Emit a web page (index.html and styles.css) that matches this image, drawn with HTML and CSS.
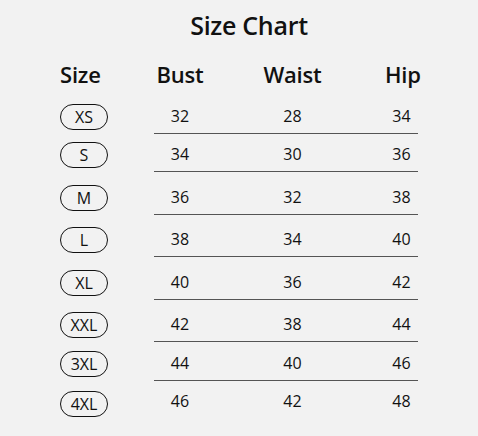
FILE: index.html
```html
<!DOCTYPE html>
<html lang="en">
<head>
<meta charset="utf-8">
<title>Size Chart</title>
<link rel="stylesheet" href="styles.css">
</head>
<body>
<main class="page">
  <h1 class="title">Size Chart</h1>
  <div class="chart">
    <div class="head head-size">Size</div>
    <div class="head">Bust</div>
    <div class="head">Waist</div>
    <div class="head head-hip">Hip</div>

    <div class="size"><span class="pill">XS</span></div>
    <div class="cell">32</div><div class="cell">28</div><div class="cell hip">34</div>

    <div class="size"><span class="pill">S</span></div>
    <div class="cell">34</div><div class="cell">30</div><div class="cell hip">36</div>

    <div class="size"><span class="pill">M</span></div>
    <div class="cell">36</div><div class="cell">32</div><div class="cell hip">38</div>

    <div class="size"><span class="pill">L</span></div>
    <div class="cell">38</div><div class="cell">34</div><div class="cell hip">40</div>

    <div class="size"><span class="pill">XL</span></div>
    <div class="cell">40</div><div class="cell">36</div><div class="cell hip">42</div>

    <div class="size"><span class="pill">XXL</span></div>
    <div class="cell">42</div><div class="cell">38</div><div class="cell hip">44</div>

    <div class="size"><span class="pill">3XL</span></div>
    <div class="cell">44</div><div class="cell">40</div><div class="cell hip">46</div>

    <div class="size last"><span class="pill">4XL</span></div>
    <div class="cell last">46</div><div class="cell last">42</div><div class="cell hip last">48</div>
  </div>
</main>
</body>
</html>
```

FILE: styles.css
```css
html, body {
  margin: 0;
  padding: 0;
  background: #f2f2f2;
}

body {
  font-family: "Open Sans", "Noto Sans", sans-serif;
  color: #111;
  width: 478px;
  height: 436px;
  overflow: hidden;
}

.page {
  padding-top: 10px;
}

.title {
  margin: 0;
  padding-left: 20px;
  font-size: 25px;
  line-height: 30px;
  font-weight: 600;
  text-align: center;
  letter-spacing: -0.3px;
}

.chart {
  margin: 20px 0 0 60px;
  display: grid;
  grid-template-columns: 94px 52px 173px 39px;
  grid-template-rows: 28px 46px 38px 43px 42px 43px 42px 39px 38px;
}

.head {
  font-size: 22px;
  line-height: 28px;
  font-weight: 600;
  text-align: center;
  white-space: nowrap;
  letter-spacing: -0.2px;
}

.head-size {
  text-align: left;
}

.head-hip {
  padding-left: 6px;
}

.size {
  display: flex;
  align-items: flex-end;
  padding-bottom: 4px;
}

.pill {
  box-sizing: border-box;
  width: 48px;
  height: 26px;
  border: 1.5px solid #111;
  border-radius: 13px;
  display: flex;
  align-items: center;
  justify-content: center;
  font-size: 16px;
  line-height: 1;
}

.cell {
  display: flex;
  align-items: flex-end;
  justify-content: center;
  padding-bottom: 4px;
  font-size: 16px;
  line-height: 26px;
  border-bottom: 1px solid #555;
}

.cell.hip {
  padding-left: 6px;
}

.cell.last {
  border-bottom: none;
  padding-bottom: 5px;
}

.size.last {
  padding-bottom: 2px;
}
```
